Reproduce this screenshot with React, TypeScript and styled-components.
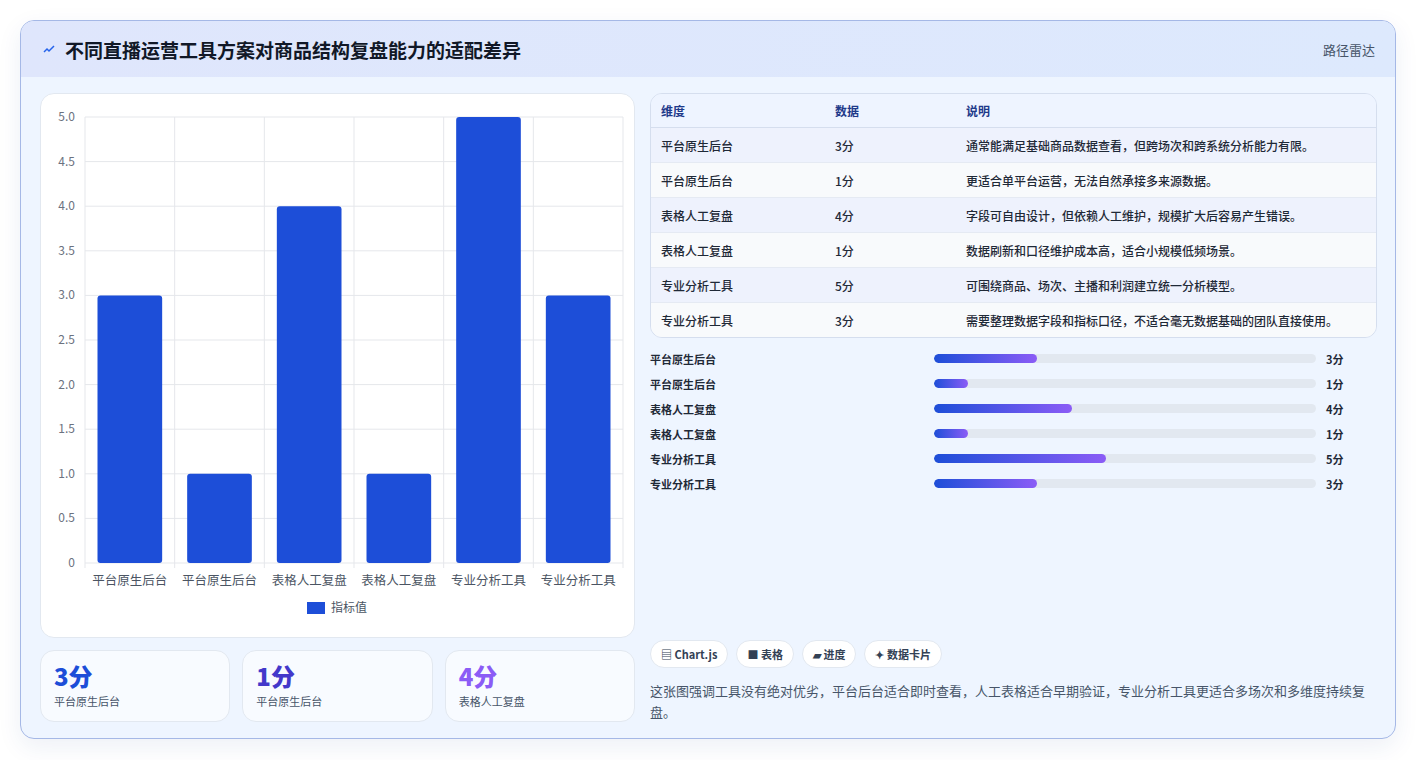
import React from 'react';
import styled, { createGlobalStyle } from 'styled-components';

const GlobalStyle = createGlobalStyle`
    body {
        margin: 0;
        background: #ffffff;
        font-family: "Noto Sans CJK SC", "Noto Sans", sans-serif;
    }
`;

interface Row {
    name: string;
    value: number;
    note: string;
}

const rows: Row[] = [
    { name: '平台原生后台', value: 3, note: '通常能满足基础商品数据查看，但跨场次和跨系统分析能力有限。' },
    { name: '平台原生后台', value: 1, note: '更适合单平台运营，无法自然承接多来源数据。' },
    { name: '表格人工复盘', value: 4, note: '字段可自由设计，但依赖人工维护，规模扩大后容易产生错误。' },
    { name: '表格人工复盘', value: 1, note: '数据刷新和口径维护成本高，适合小规模低频场景。' },
    { name: '专业分析工具', value: 5, note: '可围绕商品、场次、主播和利润建立统一分析模型。' },
    { name: '专业分析工具', value: 3, note: '需要整理数据字段和指标口径，不适合毫无数据基础的团队直接使用。' },
];

const Page = styled.div`
    padding: 20px 20px 20px 20px;
    height: 720px;
`;

const Card = styled.div`
    width: 1376px;
    height: 719px;
    box-sizing: border-box;
    border: 1px solid #a5b8e6;
    border-radius: 14px;
    background: #eef5ff;
    overflow: hidden;
    box-shadow: 0 8px 24px rgba(30, 58, 138, 0.08);
    display: flex;
    flex-direction: column;
`;

const Header = styled.div`
    height: 56px;
    flex: none;
    background: linear-gradient(90deg, #dfe6fc, #dde9fd);
    display: flex;
    align-items: center;
    justify-content: space-between;
    padding: 0 20px 0 22px;
`;

const Title = styled.h1`
    margin: 0;
    font-size: 19px;
    font-weight: 700;
    color: #111827;
    display: flex;
    align-items: center;
    gap: 10px;
`;

const Tag = styled.span`
    font-size: 13px;
    color: #475569;
`;

const Body = styled.div`
    flex: 1;
    display: grid;
    grid-template-columns: 595px 1fr;
    gap: 15px;
    padding: 16px 18px 18px 19px;
`;

const LeftCol = styled.div`
    display: flex;
    flex-direction: column;
    gap: 12px;
`;

const ChartCard = styled.div`
    height: 543px;
    background: #ffffff;
    border: 1px solid #e2e8f0;
    border-radius: 14px;
`;

const Stats = styled.div`
    display: grid;
    grid-template-columns: repeat(3, 1fr);
    gap: 12px;
`;

const StatCard = styled.div`
    height: 72px;
    box-sizing: border-box;
    background: #f8fbff;
    border: 1px solid #e2e8f0;
    border-radius: 14px;
    padding: 10px 13px;
`;

const StatValue = styled.div<{ $color: string }>`
    font-size: 24px;
    font-weight: 800;
    line-height: 30px;
    color: ${p => p.$color};
`;

const StatLabel = styled.div`
    font-size: 11px;
    color: #475569;
    margin-top: 2px;
`;

const RightCol = styled.div`
    display: flex;
    flex-direction: column;
`;

const TableWrap = styled.div`
    border: 1px solid #d5deee;
    border-radius: 12px;
    overflow: hidden;
`;

const Table = styled.table`
    width: 100%;
    border-collapse: collapse;
    font-size: 12px;
`;

const TH = styled.th`
    text-align: left;
    height: 33px;
    padding: 0 10px;
    color: #1e3a8a;
    font-weight: 700;
    background: #eef4ff;
    border-bottom: 1px solid #d5deee;
`;

const TR = styled.tr<{ $odd: boolean }>`
    background: ${p => (p.$odd ? '#eef2fd' : '#f8fafc')};
`;

const TD = styled.td`
    height: 34px;
    padding: 0 10px;
    color: #1f2937;
    font-weight: 500;
    border-top: 1px solid #e5eaf3;
`;

const Bars = styled.div`
    margin-top: 12px;
    display: flex;
    flex-direction: column;
    gap: 8px;
`;

const BarRow = styled.div`
    display: grid;
    grid-template-columns: 274px 382px 1fr;
    align-items: center;
    gap: 10px;
    font-size: 11px;
    font-weight: 700;
    color: #1f2937;
    height: 17px;
`;

const Track = styled.div`
    height: 9px;
    border-radius: 5px;
    background: #e2e8f0;
    overflow: hidden;
`;

const Fill = styled.div`
    height: 100%;
    border-radius: 5px;
    background: linear-gradient(90deg, #1d4ed8, #8b5cf6);
`;

const Spacer = styled.div`
    flex: 1;
`;

const Chips = styled.div`
    display: flex;
    gap: 8px;
`;

const Chip = styled.span`
    height: 26px;
    padding: 0 10px;
    border: 1px solid #e2e8f0;
    border-radius: 14px;
    background: #ffffff;
    display: flex;
    align-items: center;
    gap: 4px;
    font-size: 11px;
    font-weight: 700;
    color: #334155;
`;

const Note = styled.p`
    margin: 12px 0 0;
    font-size: 13px;
    line-height: 21px;
    color: #475569;
`;

const BarChart = () => {
    const x0 = 44;
    const x1 = 582;
    const y0 = 23;
    const y1 = 469;
    const step = (x1 - x0) / 6;
    const ticks = [0, 0.5, 1, 1.5, 2, 2.5, 3, 3.5, 4, 4.5, 5];
    const yOf = (v: number) => y1 - ((y1 - y0) * v) / 5;
    return (
        <svg width="594" height="541" viewBox="0 0 594 541" fontFamily="'Noto Sans CJK SC', sans-serif">
            {ticks.map(t => (
                <g key={t}>
                    <line x1={x0} x2={x1} y1={yOf(t)} y2={yOf(t)} stroke="#e5e7eb" />
                    <text x={x0 - 10} y={yOf(t) + 4} fontSize="12" fill="#6b7280" textAnchor="end">
                        {t === 0 ? '0' : t.toFixed(1)}
                    </text>
                </g>
            ))}
            {Array.from({ length: 7 }).map((_, i) => (
                <line key={i} x1={x0 + i * step} x2={x0 + i * step} y1={y0} y2={y1 + 5} stroke="#e5e7eb" />
            ))}
            {rows.map((r, i) => (
                <g key={i}>
                    <rect x={x0 + i * step + 12.5} y={yOf(r.value)} width={step - 25} height={y1 - yOf(r.value)} rx="3" fill="#1d4ed8" />
                    <text x={x0 + i * step + step / 2} y={y1 + 22} fontSize="12.5" fill="#4b5563" textAnchor="middle">
                        {r.name}
                    </text>
                </g>
            ))}
            <rect x="266" y="508" width="18" height="12" fill="#1d4ed8" />
            <text x="290" y="518" fontSize="12" fill="#4b5563">指标值</text>
        </svg>
    );
};

const App = () => (
    <>
        <GlobalStyle />
        <Page>
            <Card>
                <Header>
                    <Title>
                        <svg width="12" height="10" viewBox="0 0 12 10">
                            <path d="M1 8 L4 5 L6 7 L11 2" stroke="#2563eb" strokeWidth="1.5" fill="none" />
                        </svg>
                        不同直播运营工具方案对商品结构复盘能力的适配差异
                    </Title>
                    <Tag>路径雷达</Tag>
                </Header>
                <Body>
                    <LeftCol>
                        <ChartCard>
                            <BarChart />
                        </ChartCard>
                        <Stats>
                            <StatCard>
                                <StatValue $color="#1d4ed8">3分</StatValue>
                                <StatLabel>平台原生后台</StatLabel>
                            </StatCard>
                            <StatCard>
                                <StatValue $color="#4338ca">1分</StatValue>
                                <StatLabel>平台原生后台</StatLabel>
                            </StatCard>
                            <StatCard>
                                <StatValue $color="#8b5cf6">4分</StatValue>
                                <StatLabel>表格人工复盘</StatLabel>
                            </StatCard>
                        </Stats>
                    </LeftCol>
                    <RightCol>
                        <TableWrap>
                            <Table>
                                <thead>
                                    <tr>
                                        <TH style={{ width: 154 }}>维度</TH>
                                        <TH style={{ width: 111 }}>数据</TH>
                                        <TH>说明</TH>
                                    </tr>
                                </thead>
                                <tbody>
                                    {rows.map((r, i) => (
                                        <TR key={i} $odd={i % 2 === 0}>
                                            <TD>{r.name}</TD>
                                            <TD>{r.value}分</TD>
                                            <TD>{r.note}</TD>
                                        </TR>
                                    ))}
                                </tbody>
                            </Table>
                        </TableWrap>
                        <Bars>
                            {rows.map((r, i) => (
                                <BarRow key={i}>
                                    <span>{r.name}</span>
                                    <Track>
                                        <Fill style={{ width: `${r.value * 9}%` }} />
                                    </Track>
                                    <span>{r.value}分</span>
                                </BarRow>
                            ))}
                        </Bars>
                        <Spacer />
                        <Chips>
                            <Chip>▤ Chart.js</Chip>
                            <Chip>■ 表格</Chip>
                            <Chip>▰ 进度</Chip>
                            <Chip>✦ 数据卡片</Chip>
                        </Chips>
                        <Note>
                            这张图强调工具没有绝对优劣，平台后台适合即时查看，人工表格适合早期验证，专业分析工具更适合多场次和多维度持续复盘。
                        </Note>
                    </RightCol>
                </Body>
            </Card>
        </Page>
    </>
);

export default App;
